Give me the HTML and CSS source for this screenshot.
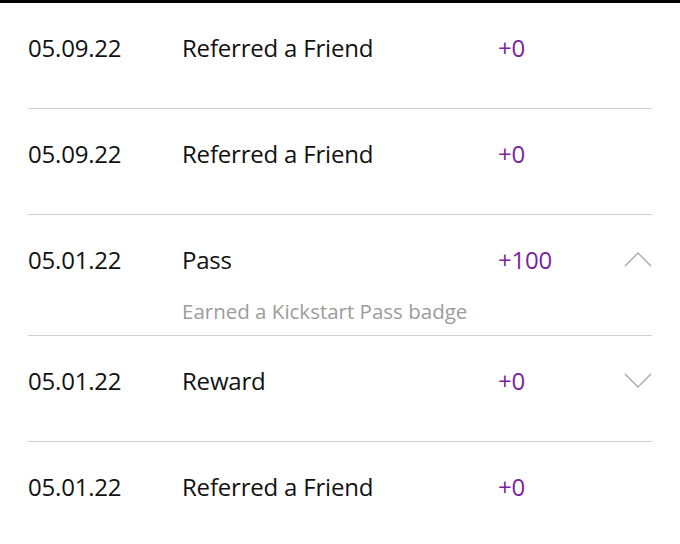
FILE: index.html
```html
<!DOCTYPE html>
<html>
<head>
<meta charset="utf-8">
<link rel="stylesheet" href="styles.css">
</head>
<body>
<div class="topbar"></div>
<ul class="list">
  <li class="row">
    <div class="main">
      <span class="date">05.09.22</span>
      <span class="desc">Referred a Friend</span>
      <span class="pts">+0</span>
      <span class="chev"></span>
    </div>
  </li>
  <li class="row">
    <div class="main">
      <span class="date">05.09.22</span>
      <span class="desc">Referred a Friend</span>
      <span class="pts">+0</span>
      <span class="chev"></span>
    </div>
  </li>
  <li class="row expanded">
    <div class="main">
      <span class="date">05.01.22</span>
      <span class="desc">Pass</span>
      <span class="pts">+100</span>
      <span class="chev"><svg width="28" height="16" viewBox="0 0 28 16"><path d="M1 15 L14 2 L27 15" fill="none" stroke="#a8a8a8" stroke-width="1.4"/></svg></span>
    </div>
    <div class="detail">Earned a Kickstart Pass badge</div>
  </li>
  <li class="row">
    <div class="main">
      <span class="date">05.01.22</span>
      <span class="desc">Reward</span>
      <span class="pts">+0</span>
      <span class="chev"><svg width="28" height="16" viewBox="0 0 28 16"><path d="M1 1 L14 14 L27 1" fill="none" stroke="#a8a8a8" stroke-width="1.4"/></svg></span>
    </div>
  </li>
  <li class="row">
    <div class="main">
      <span class="date">05.01.22</span>
      <span class="desc">Referred a Friend</span>
      <span class="pts">+0</span>
      <span class="chev"></span>
    </div>
  </li>
</ul>
</body>
</html>
```
FILE: styles.css
```css
html, body {
  margin: 0;
  padding: 0;
  background: #fff;
}
body {
  font-family: "Open Sans", "Noto Sans", sans-serif;
  color: #111;
  overflow: hidden;
}
.topbar {
  height: 3px;
  background: #000;
}
.list {
  list-style: none;
  margin: 0 28px;
  padding: 0;
}
.row {
  border-bottom: 1px solid #cfcfcf;
  padding: 30px 0 45px;
}
.row.expanded {
  padding-bottom: 12px;
}
.main {
  display: grid;
  grid-template-columns: 154px 316px 1fr 28px;
  align-items: center;
  height: 30px;
  font-size: 24px;
  line-height: 30px;
  letter-spacing: -0.2px;
}
.pts {
  color: #7b1fa2;
}
.chev {
  display: flex;
  align-items: center;
  height: 30px;
}
.row.expanded .chev {
  margin-top: -2px;
}
.detail {
  margin: 24px 0 0 154px;
  font-size: 20.5px;
  line-height: 24px;
  color: #9c9c9c;
}
```
